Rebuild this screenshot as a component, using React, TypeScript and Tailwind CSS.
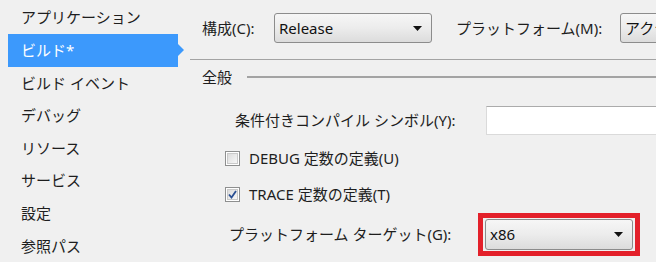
import React from "react";

const font = { fontFamily: '"Noto Sans", "Noto Sans CJK JP", sans-serif' };

function Caret() {
  return (
    <svg width="9" height="5" viewBox="0 0 9 5" className="shrink-0">
      <path d="M0 0 H9 L4.5 5 Z" fill="#111" />
    </svg>
  );
}

function Combo({ text, className }: { text: string; className: string }) {
  return (
    <div
      className={`flex items-center shrink-0 rounded-[3px] border border-[#8c8c8c] bg-gradient-to-b from-[#f6f6f6] via-[#ececec] to-[#dcdcdc] pl-[4px] pr-[9px] text-[15px] text-[#111] ${className}`}
    >
      <span className="flex-1 whitespace-nowrap overflow-hidden">{text}</span>
      <Caret />
    </div>
  );
}

function Check({ checked }: { checked: boolean }) {
  return (
    <div className="w-[15px] h-[15px] shrink-0 border border-[#8e8f8f] bg-white p-[1px]">
      <div className="w-full h-full border border-[#c9c9c9] bg-gradient-to-br from-[#dcdcdc] to-[#f7f7f7] flex items-center justify-center">
        {checked && (
          <svg width="9" height="9" viewBox="0 0 9 9">
            <path d="M1 4.5 L3.5 7.5 L8 1" fill="none" stroke="#2a4f93" strokeWidth="1.8" />
          </svg>
        )}
      </div>
    </div>
  );
}

const items = [
  "アプリケーション",
  "ビルド*",
  "ビルド イベント",
  "デバッグ",
  "リソース",
  "サービス",
  "設定",
  "参照パス",
];

export default function App() {
  return (
    <div
      className="w-[656px] h-[262px] bg-[#f0f0f0] flex overflow-hidden text-[#1e1e1e]"
      style={font}
    >
      <div className="w-[190px] shrink-0 flex flex-col pt-[1px]">
        {items.map((t, i) => (
          <div key={t} className="h-[33px] relative flex items-center">
            {i === 1 ? (
              <>
                <div className="ml-[8px] w-[170px] h-[33px] bg-[#3c99fc] text-white flex items-center pl-[13px] text-[15px] whitespace-nowrap">
                  {t}
                </div>
                <div className="absolute left-[178px] top-[10px] w-0 h-0 border-y-[6px] border-y-transparent border-l-[6px] border-l-[#3c99fc]" />
              </>
            ) : (
              <div className="pl-[21px] text-[15px] whitespace-nowrap">{t}</div>
            )}
          </div>
        ))}
      </div>

      <div className="flex-1 flex flex-col min-w-0 overflow-hidden">
        <div className="mt-[13px] h-[30px] flex items-center pl-[12px] text-[15px] whitespace-nowrap">
          <span className="w-[72px] shrink-0">構成(C):</span>
          <Combo text="Release" className="w-[158px] h-[30px]" />
          <span className="ml-[24px] w-[164px] shrink-0">プラットフォーム(M):</span>
          <Combo text="アクティブ (x86)" className="w-[120px] h-[30px]" />
        </div>

        <div className="mt-[16px] h-px bg-[#a3a3a3]" />

        <div className="mt-[7px] h-[20px] flex items-center pl-[12px] text-[15px]">
          <span className="whitespace-nowrap">全般</span>
          <div className="ml-[15px] flex-1 h-[2px] bg-[#a3a3a3]" />
        </div>

        <div className="mt-[19px] h-[29px] flex items-center pl-[45px] text-[15px]">
          <span className="w-[251px] shrink-0 whitespace-nowrap">
            条件付きコンパイル シンボル(Y):
          </span>
          <div className="h-[29px] w-[200px] shrink-0 bg-white border border-[#dadada] border-t-[#ababab]" />
        </div>

        <div className="mt-[13px] h-[20px] flex items-center pl-[35px] text-[15px]">
          <Check checked={false} />
          <span className="ml-[9px] whitespace-nowrap">DEBUG 定数の定義(U)</span>
        </div>

        <div className="mt-[16px] h-[20px] flex items-center pl-[35px] text-[15px]">
          <Check checked={true} />
          <span className="ml-[9px] whitespace-nowrap">TRACE 定数の定義(T)</span>
        </div>

        <div className="mt-[9px] h-[43px] flex items-center pl-[39px] text-[15px]">
          <span className="w-[249px] shrink-0 whitespace-nowrap">
            プラットフォーム ターゲット(G):
          </span>
          <div className="shrink-0 border-[5px] border-[#e3202a] px-[2px] py-[1px]">
            <Combo text="x86" className="w-[148px] h-[31px]" />
          </div>
        </div>
      </div>
    </div>
  );
}
